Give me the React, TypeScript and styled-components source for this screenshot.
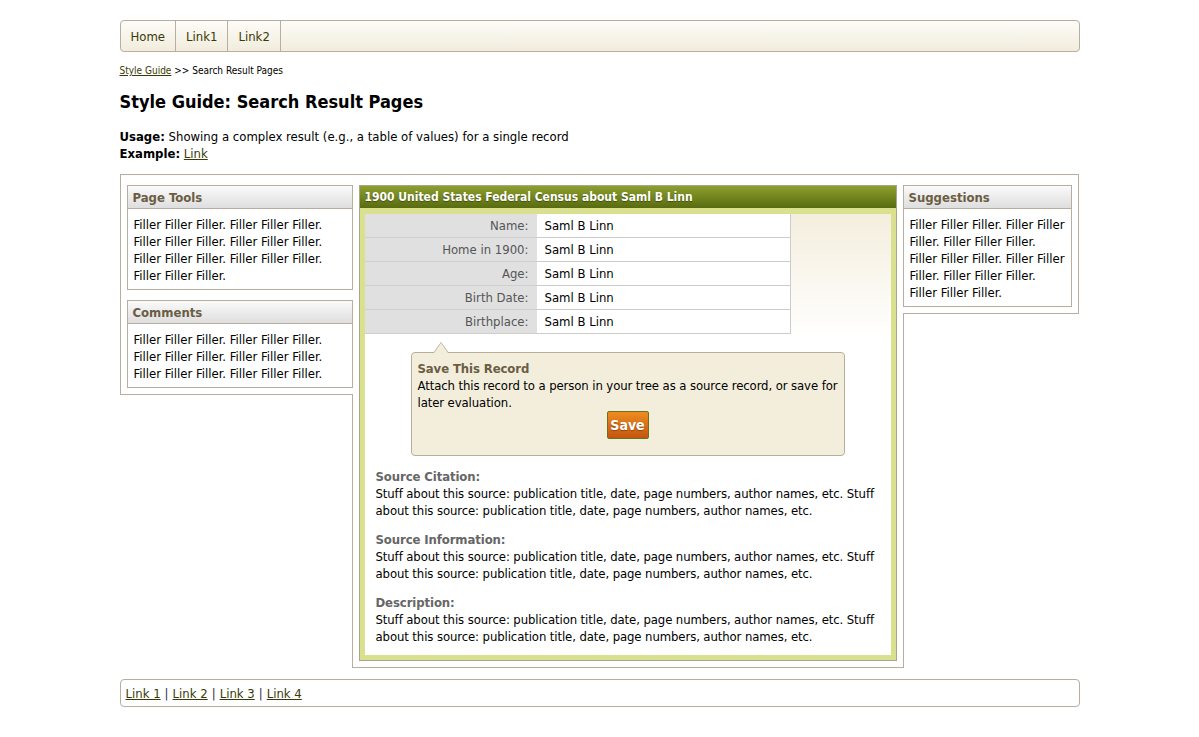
import React from "react";
import styled, { createGlobalStyle } from "styled-components";

const FONT = `"DejaVu Sans Condensed", "DejaVu Sans", Verdana, sans-serif`;
const LINE = "#b9ada0";

const Global = createGlobalStyle`
  html, body { margin: 0; padding: 0; background: #fff; }
  body { font-family: ${FONT}; font-size: 13px; color: #000; }
  a { color: #3a3a06; }
`;

const Page = styled.div`
  width: 960px;
  margin: 20px auto 0;
`;

const Nav = styled.nav`
  height: 30px;
  display: flex;
  border: 1px solid ${LINE};
  border-radius: 4px;
  background: linear-gradient(#fdfcf9, #f1ecdc);
`;

const NavItem = styled.a`
  display: flex;
  align-items: center;
  padding: 0 10px;
  border-right: 1px solid ${LINE};
  color: #3a3a06;
  text-decoration: none;
  font-size: 13px;
`;

const Crumbs = styled.div`
  margin-top: 12px;
  font-size: 10px;
  line-height: 14px;
`;

const Title = styled.h1`
  margin: 13px 0 0;
  font-size: 18px;
  line-height: 22px;
  font-weight: bold;
`;

const Info = styled.div`
  margin-top: 15px;
  line-height: 17px;
`;

const Frame = styled.div`
  margin-top: 12px;
  display: flex;
  align-items: flex-start;
`;

const SideCol = styled.div<{ $side: "left" | "right" }>`
  position: relative;
  z-index: 1;
  background: #fff;
  border-top: 1px solid ${LINE};
  border-bottom: 1px solid ${LINE};
  ${(p) =>
    p.$side === "left"
      ? `border-left: 1px solid ${LINE}; padding: 10px 0 6px 6px; margin-right: -1px;`
      : `border-right: 1px solid ${LINE}; padding: 10px 6px 6px 0; margin-left: -1px;`}
  display: flex;
  flex-direction: column;
  gap: 10px;
`;

const Box = styled.div<{ $w: number }>`
  width: ${(p) => p.$w}px;
  border: 1px solid ${LINE};
  background: #fff;
`;

const BoxHead = styled.div`
  height: 22px;
  line-height: 23px;
  padding-left: 5px;
  border-bottom: 1px solid ${LINE};
  background: linear-gradient(#fafafa, #dedede);
  color: #6b5d44;
  font-weight: bold;
  font-size: 13px;
`;

const BoxBody = styled.div`
  padding: 7px 3px 5px 6px;
  line-height: 17px;
`;

const BodyLine = styled.div``;

const CenterCol = styled.div`
  border: 1px solid ${LINE};
  padding: 10px 6px 6px;
  background: #fff;
`;

const Panel = styled.div`
  width: 536px;
  border: 1px solid #a9a68c;
  background: #d9e18e;
`;

const PanelHead = styled.div`
  height: 22px;
  line-height: 23px;
  padding-left: 5px;
  background: linear-gradient(#8d9f2e, #586b10);
  color: #fff;
  font-weight: bold;
  font-size: 12px;
  text-shadow: 0 1px 1px rgba(40, 50, 0, 0.6);
`;

const PanelBody = styled.div`
  padding: 6px 5px 5px;
`;

const Content = styled.div`
  background: linear-gradient(#f4eedd, #fff 125px);
  padding-bottom: 10px;
`;

const Table = styled.div`
  width: 426px;
  display: grid;
  grid-template-columns: 172px 254px;
`;

const Label = styled.div`
  height: 23px;
  line-height: 24px;
  background: #e0e0e0;
  color: #555;
  text-align: right;
  padding-right: 8px;
  border-bottom: 1px solid #cfcfcf;
`;

const Value = styled.div`
  height: 23px;
  line-height: 24px;
  background: #fff;
  padding-left: 8px;
  border-bottom: 1px solid #cccccc;
  border-right: 1px solid #cccccc;
`;

const Callout = styled.div`
  position: relative;
  margin: 18px 0 0 46px;
  width: 420px;
  padding: 7px 6px 16px 6px;
  border: 1px solid #b8ae98;
  border-radius: 4px;
  background: #f3eedc;
  line-height: 17px;
  letter-spacing: -0.1px;

  &::before,
  &::after {
    content: "";
    position: absolute;
    width: 0;
    height: 0;
    border-style: solid;
    border-color: transparent;
  }
  &::before {
    left: 21px;
    top: -11px;
    border-width: 0 8px 11px 8px;
    border-bottom-color: #b8ae98;
  }
  &::after {
    left: 22px;
    top: -10px;
    border-width: 0 7px 10px 7px;
    border-bottom-color: #f3eedc;
  }
`;

const CalloutTitle = styled.div`
  font-weight: bold;
  color: #6b5d44;
`;

const ButtonRow = styled.div`
  display: flex;
  justify-content: center;
`;

const SaveButton = styled.button`
  width: 42px;
  height: 28px;
  padding: 0;
  border: 1px solid #67741c;
  border-radius: 2px;
  background: linear-gradient(#ee8c20, #c2560f);
  color: #fff;
  font-family: ${FONT};
  font-weight: bold;
  font-size: 14px;
  text-shadow: 0 1px 1px rgba(90, 40, 0, 0.5);
  cursor: pointer;
`;

const Sections = styled.div`
  padding: 12px 4px 0 11px;
  display: flex;
  flex-direction: column;
  gap: 12px;
  line-height: 17px;
  letter-spacing: -0.1px;
`;

const SectionTitle = styled.div`
  font-weight: bold;
  color: #666;
`;

const Footer = styled.div`
  margin-top: 11px;
  height: 26px;
  display: flex;
  align-items: center;
  padding-left: 5px;
  border: 1px solid ${LINE};
  border-radius: 4px;
`;

const Sep = styled.span`
  color: #2c2c4a;
  margin: 0 4px;
`;

const six = "Filler Filler Filler. Filler Filler Filler.";
const three = "Filler Filler Filler.";
const nine = `${six} ${three}`;
const stuff =
  "Stuff about this source: publication title, date, page numbers, author names, etc. Stuff about this source: publication title, date, page numbers, author names, etc.";

const rows = ["Name:", "Home in 1900:", "Age:", "Birth Date:", "Birthplace:"];
const sections = ["Source Citation:", "Source Information:", "Description:"];

function Lines({ items }: { items: string[] }) {
  return (
    <BoxBody>
      {items.map((t, i) => (
        <BodyLine key={i}>{t}</BodyLine>
      ))}
    </BoxBody>
  );
}

export default function App() {
  return (
    <>
      <Global />
      <Page>
        <Nav>
          <NavItem href="#">Home</NavItem>
          <NavItem href="#">Link1</NavItem>
          <NavItem href="#">Link2</NavItem>
        </Nav>
        <Crumbs>
          <a href="#">Style Guide</a> &gt;&gt; Search Result Pages
        </Crumbs>
        <Title>Style Guide: Search Result Pages</Title>
        <Info>
          <div>
            <b>Usage:</b> Showing a complex result (e.g., a table of values) for a single record
          </div>
          <div>
            <b>Example:</b> <a href="#">Link</a>
          </div>
        </Info>
        <Frame>
          <SideCol $side="left">
            <Box $w={224}>
              <BoxHead>Page Tools</BoxHead>
              <Lines items={[six, six, six, three]} />
            </Box>
            <Box $w={224}>
              <BoxHead>Comments</BoxHead>
              <Lines items={[six, six, six]} />
            </Box>
          </SideCol>
          <CenterCol>
            <Panel>
              <PanelHead>1900 United States Federal Census about Saml B Linn</PanelHead>
              <PanelBody>
                <Content>
                  <Table>
                    {rows.map((r) => (
                      <React.Fragment key={r}>
                        <Label>{r}</Label>
                        <Value>Saml B Linn</Value>
                      </React.Fragment>
                    ))}
                  </Table>
                  <Callout>
                    <CalloutTitle>Save This Record</CalloutTitle>
                    <div>
                      Attach this record to a person in your tree as a source record, or save for later
                      evaluation.
                    </div>
                    <ButtonRow>
                      <SaveButton>Save</SaveButton>
                    </ButtonRow>
                  </Callout>
                  <Sections>
                    {sections.map((s) => (
                      <div key={s}>
                        <SectionTitle>{s}</SectionTitle>
                        <div>{stuff}</div>
                      </div>
                    ))}
                  </Sections>
                </Content>
              </PanelBody>
            </Panel>
          </CenterCol>
          <SideCol $side="right">
            <Box $w={167}>
              <BoxHead>Suggestions</BoxHead>
              <Lines items={[nine, nine, three]} />
            </Box>
          </SideCol>
        </Frame>
        <Footer>
          <a href="#">Link 1</a>
          <Sep>|</Sep>
          <a href="#">Link 2</a>
          <Sep>|</Sep>
          <a href="#">Link 3</a>
          <Sep>|</Sep>
          <a href="#">Link 4</a>
        </Footer>
      </Page>
    </>
  );
}
